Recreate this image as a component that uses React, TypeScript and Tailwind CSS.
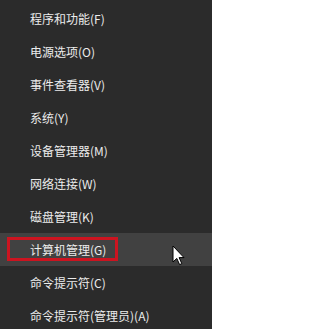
const items = [
  "程序和功能(F)",
  "电源选项(O)",
  "事件查看器(V)",
  "系统(Y)",
  "设备管理器(M)",
  "网络连接(W)",
  "磁盘管理(K)",
  "计算机管理(G)",
  "命令提示符(C)",
  "命令提示符(管理员)(A)",
];

function Cursor() {
  return (
    <svg
      width="13"
      height="21"
      viewBox="0 0 13 21"
      className="absolute left-[172px] top-[12px]"
    >
      <path
        d="M1 1 L1 17 L4.8 13.4 L7.6 19.6 L9.8 18.6 L7.1 12.6 L12 12.6 Z"
        fill="#ffffff"
        stroke="#000000"
        strokeWidth="1"
        strokeLinejoin="miter"
      />
    </svg>
  );
}

export default function App() {
  return (
    <div
      className="w-[212px] h-[329px] bg-[#2b2b2b] pt-[2px] overflow-hidden text-[12px] text-[#ececec]"
      style={{ fontFamily: '"Noto Sans CJK SC", "Noto Sans", sans-serif' }}
    >
      {items.map((label, i) => {
        const active = i === 7;
        return (
          <div
            key={label}
            className={
              active
                ? "relative h-[33px] flex items-center pl-[30px] bg-[#414141]"
                : "relative h-[33px] flex items-center pl-[30px]"
            }
          >
            <span className="leading-none">{label}</span>
            {active && (
              <>
                <div className="absolute left-[7px] top-[4px] w-[111px] h-[24px] border-[3px] border-[#cc1420]" />
                <Cursor />
              </>
            )}
          </div>
        );
      })}
    </div>
  );
}
